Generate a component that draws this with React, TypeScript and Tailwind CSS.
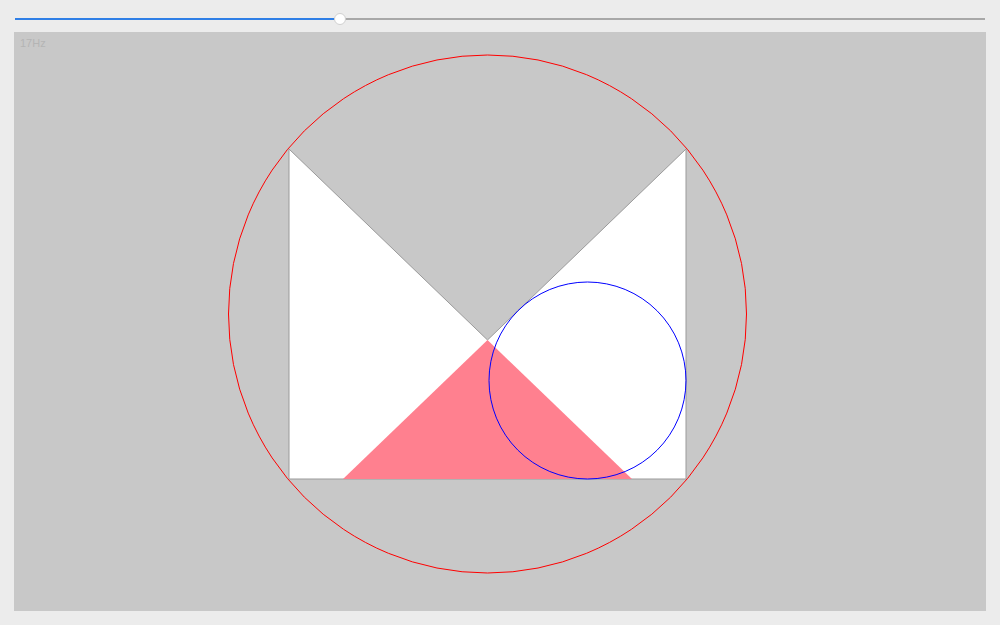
import React from "react";

const OX = 14;
const OY = 32;

function Scene() {
  // coordinates in page space, shifted into the canvas
  const p = (x: number, y: number) => `${x - OX},${y - OY}`;
  const m = [
    p(289, 149),
    p(487.5, 340),
    p(686, 149),
    p(686, 479),
    p(289, 479),
  ].join(" ");
  const tri = [p(487.5, 340), p(632, 479), p(343, 479)].join(" ");

  return (
    <svg width={972} height={579} viewBox="0 0 972 579" className="block">
      <polygon points={m} fill="#ffffff" stroke="#9a9a9a" strokeWidth={1} />
      <polygon points={tri} fill="#ff808f" />
      <circle cx={487.5 - OX} cy={314 - OY} r={259} fill="none" stroke="#ff0000" strokeWidth={1} />
      <circle cx={587.5 - OX} cy={380.5 - OY} r={98.5} fill="none" stroke="#0000ff" strokeWidth={1} />
    </svg>
  );
}

export default function App() {
  const value = 0.335;

  return (
    <div className="w-[1000px] h-[625px] bg-[#ececec] flex flex-col font-['Liberation_Sans',Arial,sans-serif]">
      {/* Slider */}
      <div className="h-[32px] px-[15px] pt-[18px]">
        <div className="relative h-[2px] flex">
          <div className="h-full bg-[#2f7fe6]" style={{ width: `${value * 100}%` }} />
          <div className="h-full flex-1 bg-[#a8a8a8]" />
          <div
            className="absolute top-1/2 w-[12px] h-[12px] -translate-x-1/2 -translate-y-1/2 rounded-full bg-white border border-[#d0d0d0]"
            style={{ left: `${value * 100}%` }}
          />
        </div>
      </div>

      {/* Canvas */}
      <div className="relative mx-[14px] w-[972px] h-[579px] bg-[#c8c8c8]">
        <span className="absolute left-[6px] top-[6px] text-[11px] leading-none text-[#b4b4b4]">17Hz</span>
        <Scene />
      </div>
    </div>
  );
}
